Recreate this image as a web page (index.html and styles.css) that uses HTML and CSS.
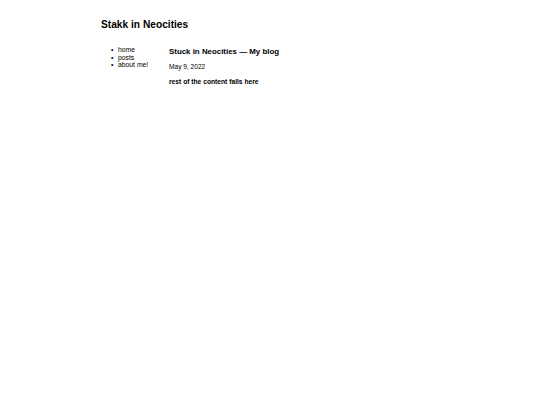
FILE: index.html
```
<!DOCTYPE html>
<html>
<head>
<meta charset="utf-8">
<link rel="stylesheet" href="styles.css">
</head>
<body>
<div class="page">
  <h1 class="site-title">Stakk in Neocities</h1>
  <div class="layout">
    <ul class="nav">
      <li>home</li>
      <li>posts</li>
      <li>about me!</li>
    </ul>
    <div class="main">
      <h2 class="post-title">Stuck in Neocities — My blog</h2>
      <p class="date">May 9, 2022</p>
      <p class="content">rest of the content falls here</p>
    </div>
  </div>
</div>
</body>
</html>
```
FILE: styles.css
```
html, body { margin: 0; padding: 0; background: #fff; }
body { font-family: "Liberation Sans", Arial, sans-serif; color: #000; }
.page { width: 338px; margin: 0 auto; padding-top: 18px; }
.site-title { font-size: 10.2px; font-weight: bold; margin: 0 0 14px 0; line-height: 13px; }
.layout { display: flex; }
.nav { width: 68px; margin: 0; padding: 1px 0 0 17px; box-sizing: border-box; font-size: 6.8px; line-height: 7.5px; list-style: none; }
.nav li::before { content: "\2022"; display: inline-block; width: 7px; margin-left: -7px; }
.main { flex: 1; }
.post-title { font-size: 7.9px; font-weight: bold; margin: 0; line-height: 12px; padding-top: 1px; }
.date { font-size: 6.6px; margin: 4px 0 0 0; line-height: 9px; }
.content { font-size: 6.7px; font-weight: bold; margin: 6px 0 0 0; line-height: 9px; }
```
